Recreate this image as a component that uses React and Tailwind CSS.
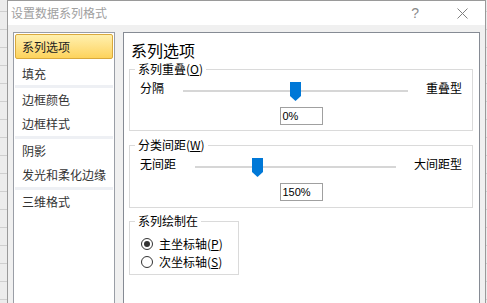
import { useState } from 'react'

const menu = [
  ['系列选项', '填充'],
  ['边框颜色', '边框样式'],
  ['阴影', '发光和柔化边缘'],
  ['三维格式'],
]

const Thumb = () => (
  <svg width="11" height="19" viewBox="0 0 11 19">
    <path d="M0 0H11V14L5.5 19L0 14Z" fill="#0078d7" />
  </svg>
)

const SliderRow = ({ left, right, thumbLeft }) => (
  <div className="flex h-[22px] items-start">
    <span className="text-[12px] leading-[16px] text-black">{left}</span>
    <div className="relative ml-[19px] mr-[18px] h-[22px] flex-1">
      <div className="absolute left-0 right-0 top-[10px] h-[2px] bg-[#d6d6d6]" />
      <div className="absolute top-[2px]" style={{ left: thumbLeft }}>
        <Thumb />
      </div>
    </div>
    <span className="text-[12px] leading-[16px] text-black">{right}</span>
  </div>
)

const Legend = ({ children }) => (
  <legend className="ml-[5px] px-[3px] text-[12px] leading-[16px] text-black">{children}</legend>
)

const ValueBox = ({ value }) => (
  <div className="mt-[5px] flex justify-center">
    <div className="flex h-[18px] w-[43px] items-center border border-[#a0a0a0] bg-white pl-[2px] font-['Liberation_Sans',sans-serif] text-[11px] text-black">
      {value}
    </div>
  </div>
)

const Radio = ({ checked, label, hotkey }) => (
  <div className="flex h-[18px] items-center gap-[6px] pl-[11px]">
    <div className="flex h-[12px] w-[12px] items-center justify-center rounded-full border border-[#333] bg-white">
      {checked && <div className="h-[6px] w-[6px] rounded-full bg-[#333]" />}
    </div>
    <span className="text-[12px] leading-[16px] text-black">
      {label}(<span className="underline">{hotkey}</span>)
    </span>
  </div>
)

export default function App() {
  const [selected] = useState('系列选项')

  return (
    <div className="flex h-[303px] w-[487px] overflow-hidden bg-white font-['Noto_Sans_CJK_SC',sans-serif]">
      <div className="w-[7px] shrink-0 bg-[image:repeating-linear-gradient(180deg,#ececec_0px,#ececec_11px,#cfcfcf_11px,#cfcfcf_12px,#ececec_12px,#ececec_18px)]" />

      <div className="flex w-[479px] shrink-0 flex-col border-x border-t border-[#9a9a9a]">
        {/* title bar */}
        <div className="flex h-[24px] shrink-0 items-center bg-white pl-[3px]">
          <span className="text-[12px] text-[#a0a0a0]">设置数据系列格式</span>
          <span className="ml-auto font-['Liberation_Sans',sans-serif] text-[14px] text-[#8a8a8a]">?</span>
          <svg className="ml-[38px] mr-[17px]" width="11" height="11" viewBox="0 0 11 11">
            <path d="M0.5 0.5L10.5 10.5M10.5 0.5L0.5 10.5" stroke="#808080" strokeWidth="1" />
          </svg>
        </div>

        <div className="flex flex-1 gap-[8px] bg-[#f0f0f0] pl-[5px] pt-[7px]">
          {/* category list */}
          <div className="h-[290px] w-[102px] shrink-0 border border-[#9a9ea6] bg-white p-[1px]">
            {menu.map((group, gi) => (
              <div key={gi}>
                {gi > 0 && <div className="h-[3px] bg-[#eef0f4]" />}
                {group.map((item) =>
                  item === selected ? (
                    <div
                      key={item}
                      className="flex h-[25px] items-center rounded-[2px] border border-[#d9a93c] bg-gradient-to-b from-[#fff0ad] to-[#fdd35b] pl-[6px] text-[12px] text-[#222]"
                    >
                      {item}
                    </div>
                  ) : (
                    <div
                      key={item}
                      className={
                        gi === 0
                          ? 'flex h-[26px] items-center pl-[7px] pt-[3px] text-[12px] text-[#333]'
                          : 'flex h-[24px] items-center pl-[7px] text-[12px] text-[#333]'
                      }
                    >
                      {item}
                    </div>
                  )
                )}
              </div>
            ))}
          </div>

          {/* options panel */}
          <div className="h-[290px] w-[357px] shrink-0 border border-[#868b94] bg-white px-[5px]">
            <div className="mb-[1px] pl-[2px] pt-[7px] text-[16px] leading-[20px] text-black">系列选项</div>

            <fieldset className="w-[344px] border border-[#dadada]">
              <Legend>
                系列重叠(<span className="underline">O</span>)
              </Legend>
              <div className="px-[10px] pb-[5px] pt-[3px]">
                <SliderRow left="分隔" right="重叠型" thumbLeft={107} />
                <ValueBox value="0%" />
              </div>
            </fieldset>

            <fieldset className="mt-[6px] w-[344px] border border-[#dadada]">
              <Legend>
                分类间距(<span className="underline">W</span>)
              </Legend>
              <div className="px-[10px] pb-[6px] pt-[3px]">
                <SliderRow left="无间距" right="大间距型" thumbLeft={57} />
                <ValueBox value="150%" />
              </div>
            </fieldset>

            <fieldset className="mt-[5px] w-[110px] border border-[#dadada]">
              <Legend>系列绘制在</Legend>
              <div className="pb-[3px] pt-[6px]">
                <Radio checked label="主坐标轴" hotkey="P" />
                <Radio label="次坐标轴" hotkey="S" />
              </div>
            </fieldset>
          </div>
        </div>
      </div>

      <div className="flex-1 bg-[image:repeating-linear-gradient(180deg,#ececec_0px,#ececec_11px,#cfcfcf_11px,#cfcfcf_12px,#ececec_12px,#ececec_18px)]" />
    </div>
  )
}
